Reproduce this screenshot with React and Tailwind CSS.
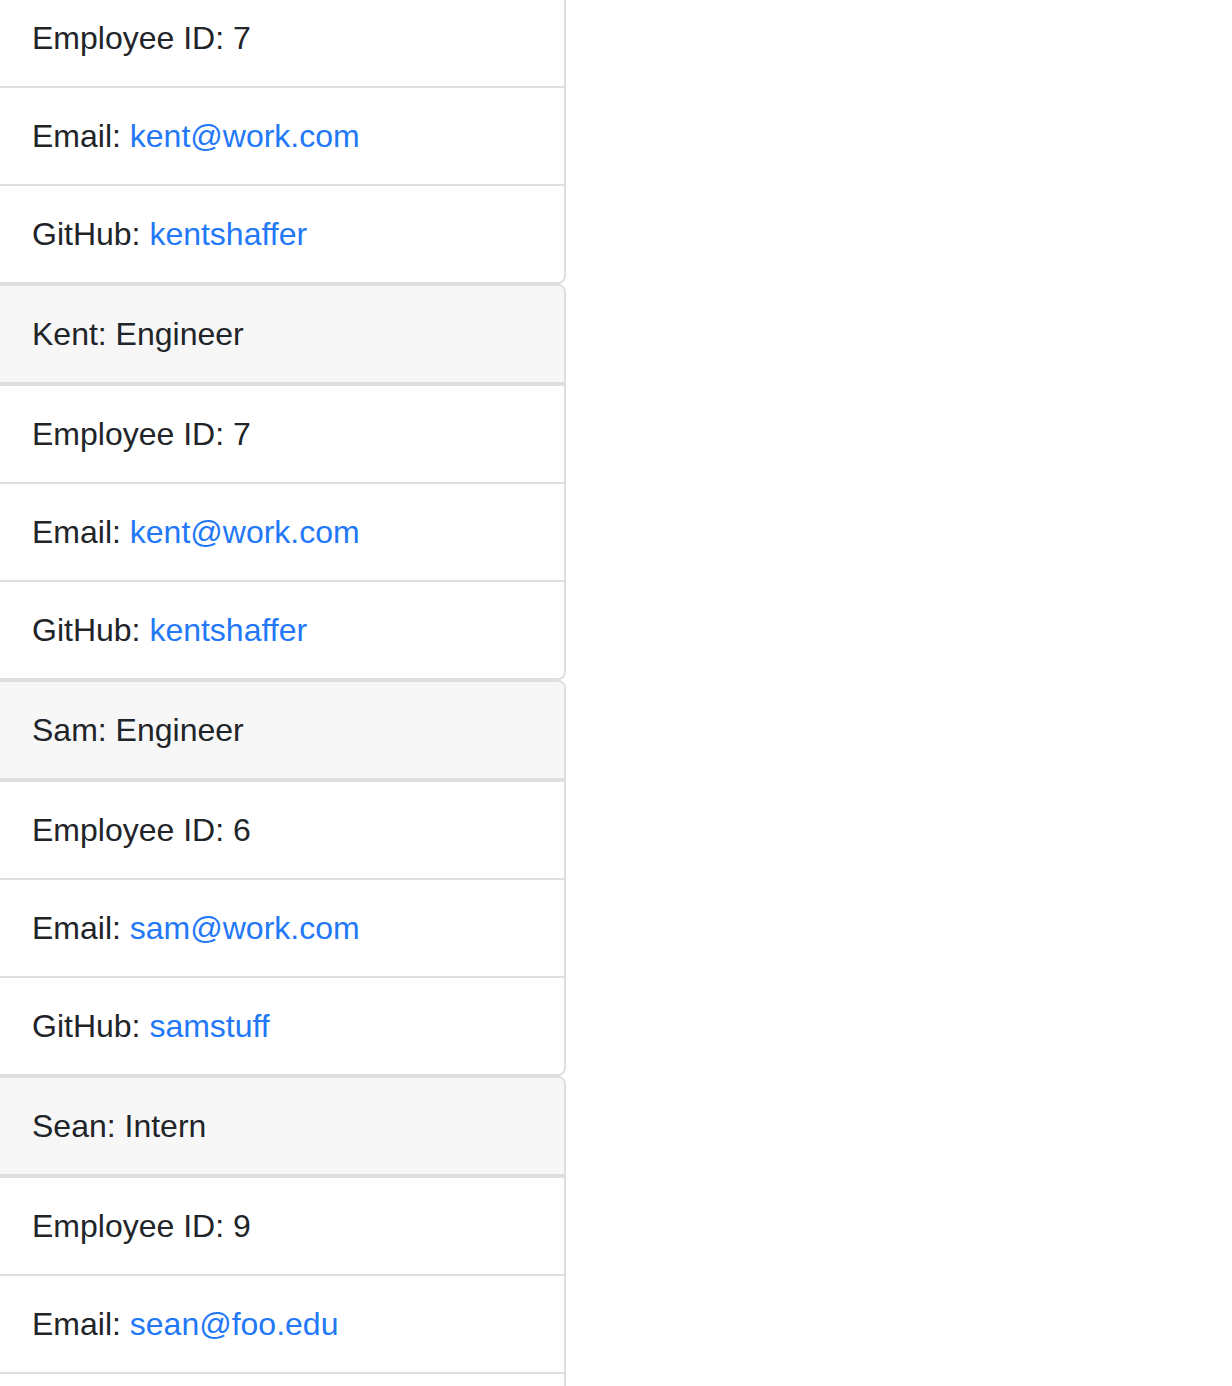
import React from 'react';

const employees = [
  // first card is scrolled so that its header sits above the viewport
  { name: 'Kent', role: 'Engineer', id: 7, email: 'kent@work.com', github: 'kentshaffer', scrolled: true },
  { name: 'Kent', role: 'Engineer', id: 7, email: 'kent@work.com', github: 'kentshaffer' },
  { name: 'Sam', role: 'Engineer', id: 6, email: 'sam@work.com', github: 'samstuff' },
  { name: 'Sean', role: 'Intern', id: 9, email: 'sean@foo.edu', school: 'Foo University' },
];

const Row = ({ children, first }) => (
  <li
    className={`px-[40px] py-[24px] leading-[48px] border-[#dfdfdf] ${
      first ? 'border-t-2 border-b-2' : 'border-b-2 last:border-b-0'
    }`}
  >
    {children}
  </li>
);

const Link = ({ children }) => <a className="text-[#2378f7]">{children}</a>;

const EmployeeCard = ({ emp }) => (
  <div
    className={`-ml-[10px] w-[576px] border-2 border-[#dfdfdf] overflow-hidden bg-white ${
      emp.scrolled ? '-mt-[14px] rounded-b-[8px]' : 'rounded-[8px]'
    }`}
  >
    {/* Header */}
    {!emp.scrolled && (
      <div className="bg-[#f7f7f7] px-[40px] py-[24px] leading-[48px] border-b-2 border-[#dfdfdf]">
        {emp.name}: {emp.role}
      </div>
    )}
    <ul>
      <Row first>Employee ID: {emp.id}</Row>
      <Row>
        Email: <Link>{emp.email}</Link>
      </Row>
      {emp.github ? (
        <Row>
          GitHub: <Link>{emp.github}</Link>
        </Row>
      ) : (
        <Row>School: {emp.school}</Row>
      )}
    </ul>
  </div>
);

export default function App() {
  return (
    <div
      className="h-[1386px] overflow-hidden bg-white text-[32px] text-[#212529]"
      style={{ fontFamily: '"Liberation Sans", Arial, sans-serif' }}
    >
      <div className="flex flex-col">
        {employees.map((emp, i) => (
          <EmployeeCard key={i} emp={emp} />
        ))}
      </div>
    </div>
  );
}
